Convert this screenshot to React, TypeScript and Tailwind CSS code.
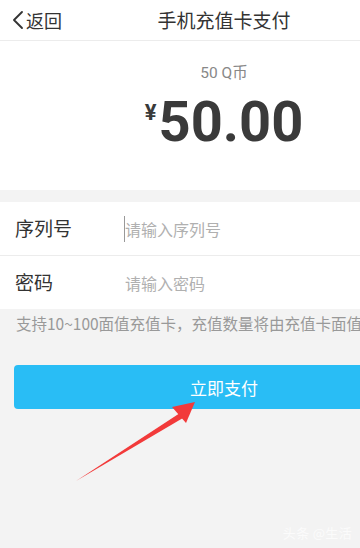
import { ChevronLeft } from 'lucide-react'

const font = { fontFamily: '"Noto Sans CJK SC", Roboto, sans-serif' }

export default function App() {
  return (
    <div className="w-[360px] h-[548px] overflow-hidden bg-[#f3f3f3] relative" style={font}>
      <div className="w-[448px]">
        {/* header */}
        <div className="h-[41px] bg-white border-b border-[#ececec] flex items-center relative">
          <div className="flex items-center pl-[2px] text-[#333]">
            <ChevronLeft size={32} strokeWidth={1.4} className="-mr-[8px]" />
            <span className="text-[18px] leading-none">返回</span>
          </div>
          <div className="absolute inset-0 flex items-center justify-center text-[19px] text-[#333]">
            手机充值卡支付
          </div>
        </div>

        {/* amount */}
        <div className="bg-white h-[149px] flex flex-col items-center">
          <div className="mt-[25px] text-[15.5px] text-[#888] leading-none" style={{ fontFamily: 'Roboto, "Noto Sans CJK SC", sans-serif' }}>
            50 Q币
          </div>
          <div className="mt-[12px] flex items-start text-[#3a3a3a] font-bold" style={{ fontFamily: 'Roboto, sans-serif' }}>
            <span className="text-[22px] leading-none mt-[8px] mr-[2px]">¥</span>
            <span className="text-[56px] leading-none">50.00</span>
          </div>
        </div>

        {/* form */}
        <div className="mt-[12px] bg-white">
          <div className="h-[54px] flex items-center border-b border-[#ececec]">
            <span className="w-[124px] pl-[15px] text-[19px] text-[#333]">序列号</span>
            <span className="w-px h-[26px] bg-[#999]" />
            <span className="text-[16px] text-[#b0b0b0]">请输入序列号</span>
          </div>
          <div className="h-[53px] flex items-center">
            <span className="w-[124px] pl-[15px] text-[19px] text-[#333]">密码</span>
            <span className="text-[16px] text-[#b0b0b0] pl-px">请输入密码</span>
          </div>
        </div>

        <div className="pl-[16px] pt-[3px] text-[15.5px] text-[#999] whitespace-nowrap">
          支持10~100面值充值卡，充值数量将由充值卡面值决定
        </div>

        <div className="mx-[14px] mt-[30px] h-[44px] rounded-[4px] bg-[#29bdf5] flex items-center justify-center text-white text-[17px]">
          立即支付
        </div>
      </div>

      {/* red arrow annotation */}
      <svg className="absolute left-0 top-0 pointer-events-none" width="360" height="548">
        <polygon points="76,481 180,413 183,418" fill="#f23a3a" />
        <polygon points="195,402 172,407 186,423" fill="#f23a3a" />
      </svg>

      <div className="absolute right-[8px] bottom-[6px] text-[13px] text-white/70 tracking-wide">
        头条 @生活
      </div>
    </div>
  )
}
